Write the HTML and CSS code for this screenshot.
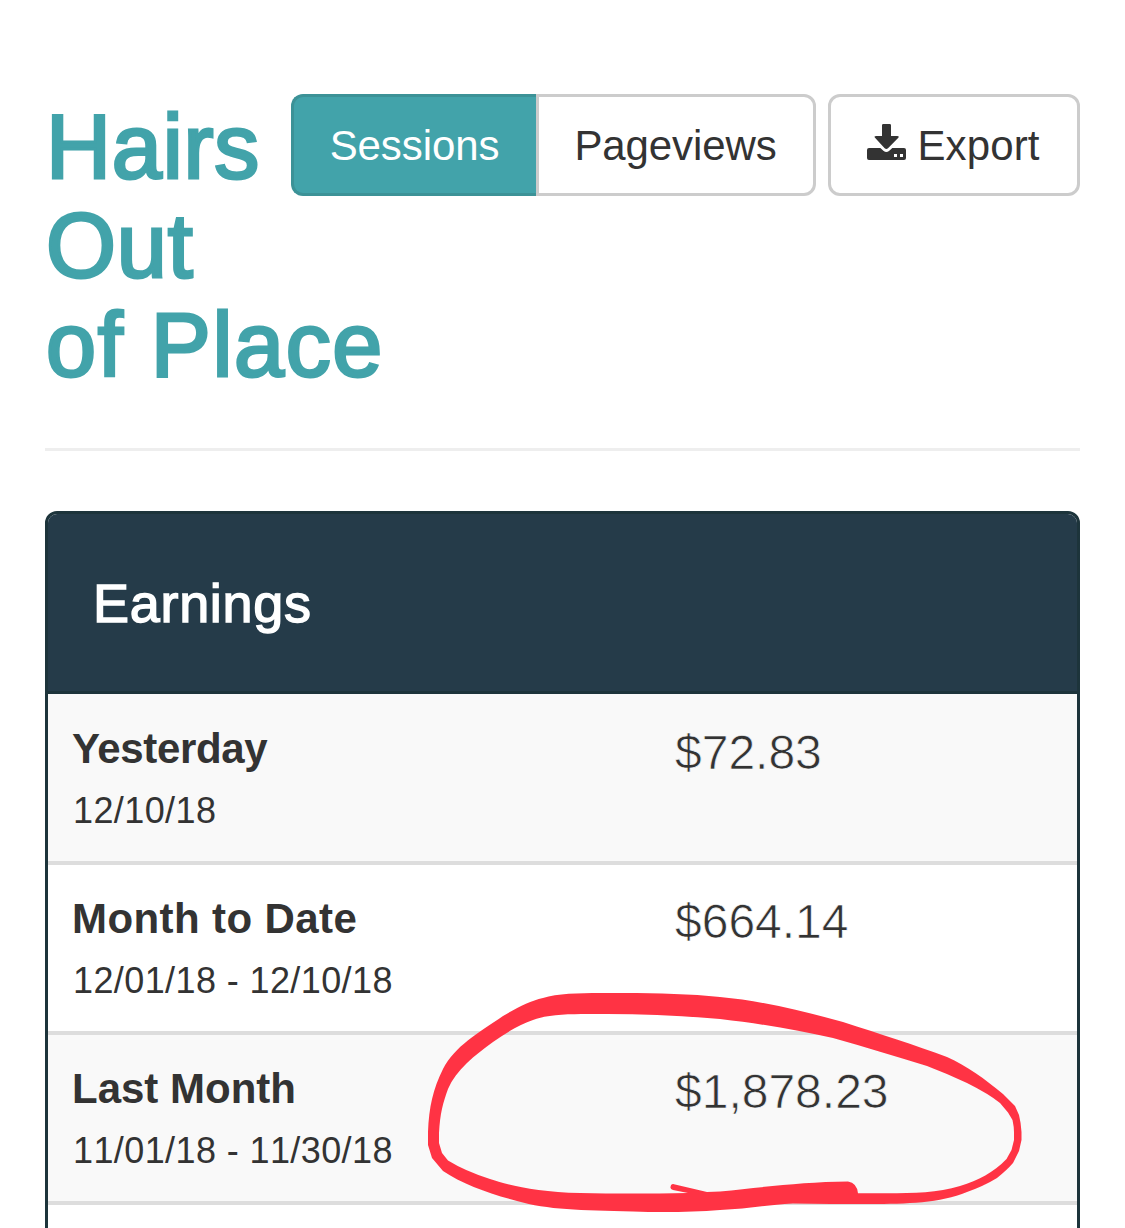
FILE: index.html
```
<!DOCTYPE html>
<html lang="en">
<head>
    <meta charset="UTF-8">
    <meta name="viewport" content="width=device-width, initial-scale=1.0">
    <title>Hairs Out of Place - Earnings</title>
    <link rel="stylesheet" href="styles.css">
</head>
<body>
    <div class="container">
        <header class="page-header">
            <div class="toolbar">
                <div class="btn-group">
                    <button type="button" class="btn active">Sessions</button>
                    <button type="button" class="btn">Pageviews</button>
                </div>
                <button type="button" class="btn btn-export">
                    <svg class="icon" viewBox="198 132 117 108" aria-hidden="true">
                        <path d="M247 132h19q4 0 4 4v32h19q7 0 3 5l-31 32q-5 4-10 0l-29-32q-4-5 3-5h18v-32q0-4 4-4z"/>
                        <path fill-rule="evenodd" d="M204 204h34l10 9q8 6 16 0l10-9h35q6 0 6 6v24q0 6-6 6H204q-6 0-6-6v-24q0-6 6-6zM279 222v9h9v-9zM297 222v9h9v-9z"/>
                    </svg>
                    <span>Export</span>
                </button>
            </div>
            <h1>Hairs<br>Out<br><span class="wide">of Place</span></h1>
        </header>

        <section class="panel">
            <div class="panel-heading">
                <h2>Earnings</h2>
            </div>
            <div class="row first">
                <div class="period">
                    <strong>Yesterday</strong>
                    <small>12/10/18</small>
                </div>
                <div class="amount">$72.83</div>
            </div>
            <div class="row">
                <div class="period">
                    <strong class="wide">Month to Date</strong>
                    <small>12/01/18 - 12/10/18</small>
                </div>
                <div class="amount">$664.14</div>
            </div>
            <div class="row">
                <div class="period">
                    <strong>Last Month</strong>
                    <small>11/01/18 - 11/30/18</small>
                </div>
                <div class="amount">$1,878.23</div>
            </div>
            <div class="row"></div>
        </section>

        <!-- hand-drawn circle around last month -->
        <svg class="marker" viewBox="420 985 610 235" aria-hidden="true">
            <path fill-rule="evenodd" d="M428 1145V1132C429 1107 433 1089 443 1069C455 1046 478 1033 503 1016C518 1007 530 1001 543 998C562 992 593 993 623 993C660 993 690 994 720 997C763 1001 803 1011 843 1022C880 1034 915 1045 947 1057C967 1066 985 1079 1003 1094Q1010 1101 1015 1106L1019 1115Q1021 1123 1021.500 1132V1140L1019 1151L1013 1163Q1007 1170 997 1178Q984 1186 967 1192C940 1203 907 1204 870 1204Q830 1204 793 1203.500C765 1205 745 1209 720 1210Q680 1213 633 1211.500C580 1210 548 1210 517 1201C490 1194 462 1184 443 1171L432 1158Z
            M439 1133C440 1113 443 1103 448 1089C456 1070 475 1055 493 1042C507 1032 521 1024 533 1020C551 1013 578 1014 607 1014C645 1014 682 1016 720 1019C763 1024 797 1030 833 1038C865 1047 895 1056 927 1066Q948 1074 967 1083Q989 1094 1000 1103L1008 1112.500L1012.500 1120Q1014 1127 1014 1132V1140L1011.500 1150L1006.500 1159C993 1173 979 1180 960 1186C930 1195 897 1193 858 1193.300Q857 1183 848 1181.500C802 1182 765 1187 720 1191.500L707 1192Q690 1188 675 1184.500Q671 1183 670.500 1187Q670 1189 673 1190L688 1193Q630 1194 580 1193C535 1192 505 1184 490 1179Q465 1171 448 1160.500L442 1153L439 1143Z"/>
        </svg>
    </div>
</body>
</html>
```
FILE: styles.css
```
* {
    box-sizing: border-box;
}

body {
    font-family: "Liberation Sans", Arial, sans-serif;
    font-size: 42px;
    margin: 0;
    color: #333;
    background-color: #fff;
}

.container {
    position: relative;
    height: 1228px;
    padding: 94px 45px 0;
    overflow: hidden;
}

.page-header {
    height: 357px;
    border-bottom: 3px solid #eee;
    margin-bottom: 60px;
}

.toolbar {
    float: right;
    display: flex;
    gap: 12px;
}

.btn-group {
    display: flex;
}

.btn {
    display: flex;
    align-items: center;
    justify-content: center;
    width: 280px;
    height: 102px;
    padding: 2px 1px 0 0;
    border: 3px solid #ccc;
    border-radius: 0 12px 12px 0;
    background-color: #fff;
    color: #333;
    font-family: inherit;
    font-size: 42px;
    letter-spacing: -0.1px;
}

.btn.active {
    width: 245px;
    border-color: #3c9297;
    border-right: 0;
    border-radius: 12px 0 0 12px;
    background-color: #42a3aa;
    color: #fff;
}

.btn-export {
    width: 252px;
    padding-right: 2px;
    gap: 12px;
    border-radius: 12px;
    letter-spacing: 0.1px;
}

.icon {
    width: 39px;
    height: 36px;
    margin-bottom: 8px;
    fill: #333;
}

h1 {
    margin: 0;
    padding: 4px 0 0 1px;
    color: #42a3aa;
    font-size: 90px;
    font-weight: normal;
    line-height: 99px;
    letter-spacing: 0.8px;
    -webkit-text-stroke: 3px #42a3aa;
}

h1 .wide {
    letter-spacing: 1.6px;
}

.panel {
    border: 3px solid #1d343b;
    border-radius: 12px;
}

.panel-heading {
    display: flex;
    align-items: center;
    height: 180px;
    padding: 0 45px;
    border-bottom: 3px solid #1d343b;
    border-radius: 9px 9px 0 0;
    background-color: #253b49;
    color: #fff;
}

h2 {
    margin: 0;
    font-size: 54px;
    font-weight: normal;
    letter-spacing: 0.7px;
    -webkit-text-stroke: 1.4px #fff;
}

.row {
    display: grid;
    grid-template-columns: 603px 1fr;
    height: 170px;
    padding: 24px;
    border-bottom: 4px solid #ddd;
    background-color: #fff;
}

.row.first {
    height: 171px;
    padding-top: 25px;
}

.row:nth-child(even) {
    background-color: #f9f9f9;
}

.period strong,
.period small {
    display: block;
    line-height: 60px;
}

.period strong.wide {
    letter-spacing: 0.4px;
}

.first .period strong {
    letter-spacing: -0.35px;
}

.period small {
    padding-left: 1px;
    font-size: 36px;
    font-kerning: none;
    line-height: 64px;
    letter-spacing: 0.4px;
}

/* an outline in the row colour thins the digits */
.amount {
    font-size: 48px;
    line-height: 66px;
    -webkit-text-stroke: 0.7px #fff;
}

.first .amount {
    line-height: 68px;
}

.row:nth-child(even) .amount {
    -webkit-text-stroke-color: #f9f9f9;
}

.marker {
    position: absolute;
    left: 420px;
    top: 985px;
    width: 610px;
    height: 235px;
    fill: #ff3344;
}
```
